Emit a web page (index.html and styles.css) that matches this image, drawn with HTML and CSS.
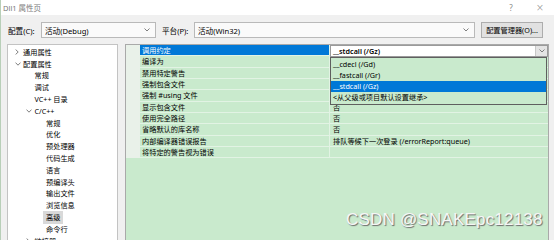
FILE: index.html
```html
<!DOCTYPE html>
<html>
<head>
<meta charset="utf-8">
<link rel="stylesheet" href="styles.css">
</head>
<body>
<div class="window">
  <div class="titlebar">
    <span class="title">Dll1 属性页</span>
    <span class="tb-btns"><span class="tb-btn">?</span><span class="tb-btn close">×</span></span>
  </div>
  <div class="toolbar">
    <span class="lbl lbl-cfg">配置(C):</span>
    <div class="combo combo-cfg"><span>活动(Debug)</span><svg class="chev" viewBox="0 0 6 4" width="6" height="4"><polyline points="0.5,0.5 3,3 5.5,0.5"/></svg></div>
    <span class="lbl lbl-plat">平台(P):</span>
    <div class="combo combo-plat"><span>活动(Win32)</span><svg class="chev" viewBox="0 0 6 4" width="6" height="4"><polyline points="0.5,0.5 3,3 5.5,0.5"/></svg></div>
    <div class="btn">配置管理器(O)...</div>
  </div>
  <div class="main">
    <div class="tree">
      <div class="item lvl0"><span class="arr"><svg viewBox="0 0 4 6" width="4" height="6"><polyline points="0.6,0.5 3.2,3 0.6,5.5"/></svg></span><span>通用属性</span></div>
      <div class="item lvl0"><span class="arr"><svg viewBox="0 0 6 4" width="6" height="4"><polyline points="0.5,0.6 3,3.2 5.5,0.6"/></svg></span><span>配置属性</span></div>
      <div class="item lvl1"><span class="arr"></span><span>常规</span></div>
      <div class="item lvl1"><span class="arr"></span><span>调试</span></div>
      <div class="item lvl1"><span class="arr"></span><span>VC++ 目录</span></div>
      <div class="item lvl1"><span class="arr"><svg viewBox="0 0 6 4" width="6" height="4"><polyline points="0.5,0.6 3,3.2 5.5,0.6"/></svg></span><span>C/C++</span></div>
      <div class="item lvl2"><span class="arr"></span><span>常规</span></div>
      <div class="item lvl2"><span class="arr"></span><span>优化</span></div>
      <div class="item lvl2"><span class="arr"></span><span>预处理器</span></div>
      <div class="item lvl2"><span class="arr"></span><span>代码生成</span></div>
      <div class="item lvl2"><span class="arr"></span><span>语言</span></div>
      <div class="item lvl2"><span class="arr"></span><span>预编译头</span></div>
      <div class="item lvl2"><span class="arr"></span><span>输出文件</span></div>
      <div class="item lvl2"><span class="arr"></span><span>浏览信息</span></div>
      <div class="item lvl2"><span class="arr"></span><span class="sel">高级</span></div>
      <div class="item lvl2"><span class="arr"></span><span>命令行</span></div>
      <div class="item lvl1"><span class="arr"><svg viewBox="0 0 4 6" width="4" height="6"><polyline points="0.6,0.5 3.2,3 0.6,5.5"/></svg></span><span>链接器</span></div>
    </div>
    <div class="grid">
      <div class="row">
        <div class="gutter"></div>
        <div class="name active">调用约定</div>
        <div class="value first">
          <div class="cell-combo"><span class="cc-text">__stdcall (/Gz)</span><span class="cc-btn"><svg viewBox="0 0 6 4" width="6" height="4"><polyline points="0.5,0.5 3,3 5.5,0.5"/></svg></span></div>
          <div class="dropdown">
            <div class="opt">__cdecl (/Gd)</div>
            <div class="opt">__fastcall (/Gr)</div>
            <div class="opt picked">__stdcall (/Gz)</div>
            <div class="opt">&lt;从父级或项目默认设置继承&gt;</div>
          </div>
        </div>
      </div>
      <div class="row"><div class="gutter"></div><div class="name">编译为</div><div class="value"></div></div>
      <div class="row"><div class="gutter"></div><div class="name">禁用特定警告</div><div class="value"></div></div>
      <div class="row"><div class="gutter"></div><div class="name">强制包含文件</div><div class="value"></div></div>
      <div class="row"><div class="gutter"></div><div class="name">强制 #using 文件</div><div class="value"></div></div>
      <div class="row"><div class="gutter"></div><div class="name">显示包含文件</div><div class="value">否</div></div>
      <div class="row"><div class="gutter"></div><div class="name">使用完全路径</div><div class="value">否</div></div>
      <div class="row"><div class="gutter"></div><div class="name">省略默认的库名称</div><div class="value">否</div></div>
      <div class="row"><div class="gutter"></div><div class="name">内部编译器错误报告</div><div class="value">排队等候下一次登录 (/errorReport:queue)</div></div>
      <div class="row"><div class="gutter"></div><div class="name">将特定的警告视为错误</div><div class="value"></div></div>
      <div class="watermark">CSDN @SNAKEpc12138</div>
    </div>
  </div>
</div>
</body>
</html>
```

FILE: styles.css
```css
html, body {
  margin: 0;
  padding: 0;
}
body {
  width: 554px;
  height: 240px;
  overflow: hidden;
  background: #f0f0f0;
  font-family: "Noto Sans", "Noto Sans CJK SC", sans-serif;
  font-size: 7.2px;
  color: #000;
}
.window {
  height: 240px;
  border-left: 1px solid #b8cfb8;
  box-sizing: border-box;
}
.titlebar {
  height: 15px;
  background: #fff;
  display: flex;
  align-items: center;
  padding-left: 2px;
  color: #7a7a7a;
  font-size: 7.5px;
}
.tb-btns {
  margin-left: auto;
  margin-right: 9px;
  display: flex;
  gap: 19px;
  color: #8a8a8a;
}
.tb-btn {
  width: 10px;
  text-align: center;
  font-size: 8px;
}
.tb-btn.close {
  font-size: 10px;
  font-family: "DejaVu Sans", sans-serif;
  font-weight: 300;
}
.toolbar {
  display: flex;
  align-items: center;
  height: 16px;
  margin-top: 7px;
  padding-left: 7px;
  font-size: 7.6px;
}
.lbl-cfg { width: 33px; }
.lbl-plat { width: 32px; }
.combo {
  height: 16px;
  box-sizing: border-box;
  border: 1px solid #b9b9b9;
  background: #fafafa;
  display: flex;
  align-items: center;
  padding-left: 3px;
  padding-right: 5px;
}
.combo span { flex: 1; }
.combo-cfg { width: 115px; margin-right: 6px; }
.combo-plat { width: 281px; margin-right: 6px; }
.chev polyline, .arr polyline, .cc-btn polyline {
  fill: none;
  stroke: #707070;
  stroke-width: 0.9;
}
.btn {
  width: 62px;
  height: 16px;
  box-sizing: border-box;
  border: 1px solid #adadad;
  background: #e1e1e1;
  display: flex;
  align-items: center;
  justify-content: center;
  font-size: 7.2px;
}
.main {
  display: flex;
  margin-top: 6px;
  padding-left: 6px;
  gap: 7px;
  height: 196px;
}
.tree {
  width: 111px;
  box-sizing: border-box;
  border: 1px solid #c3c3c3;
  border-bottom: none;
  background: #fff;
  padding-top: 1px;
  overflow: hidden;
}
.item {
  height: 11.8px;
  display: flex;
  align-items: center;
  white-space: nowrap;
}
.lvl0 { padding-left: 5px; }
.lvl1 { padding-left: 16.5px; }
.lvl2 { padding-left: 28px; }
.arr {
  width: 10px;
  display: flex;
  align-items: center;
  padding-left: 1.5px;
  box-sizing: border-box;
}
.sel {
  background: #d9d9d9;
  padding: 1.5px 3px;
  margin-left: -3px;
}
.grid {
  width: 424px;
  box-sizing: border-box;
  border: 1px solid #a9a9a9;
  border-bottom: none;
  background: #c9eacd;
  position: relative;
}
.row {
  display: flex;
  height: 11.33px;
  position: relative;
}
.gutter {
  width: 14px;
  background: #e9f1e9;
  flex: none;
}
.name, .value {
  box-sizing: border-box;
  border-bottom: 1px solid #e2f3e4;
  display: flex;
  align-items: center;
  white-space: nowrap;
  overflow: visible;
}
.name {
  width: 190px;
  flex: none;
  padding-left: 2px;
  border-right: 1px solid #e2f3e4;
}
.name.active {
  background: #0078d7;
  color: #fff;
}
.value {
  flex: 1;
  padding-left: 3px;
}
.value.first {
  padding-left: 0;
  position: relative;
  border-bottom: none;
}
.cell-combo {
  position: absolute;
  left: 0;
  top: 0;
  right: 0;
  height: 12px;
  box-sizing: border-box;
  background: #fff;
  border: 1px solid #9a9a9a;
  display: flex;
  align-items: center;
  z-index: 3;
}
.cc-text {
  flex: 1;
  padding-left: 2px;
  font-weight: 600;
}
.cc-btn {
  width: 11px;
  height: 100%;
  background: #e4e4e4;
  border-left: 1px solid #c8c8c8;
  display: flex;
  align-items: center;
  justify-content: center;
}
.dropdown {
  position: absolute;
  left: 0;
  right: 1px;
  top: 12px;
  box-sizing: border-box;
  border: 1px solid #5f5f5f;
  background: #c9eacd;
  padding: 0.5px 0 1px;
  z-index: 2;
}
.opt {
  height: 11px;
  display: flex;
  align-items: center;
  padding-left: 2px;
  white-space: nowrap;
}
.opt.picked {
  background: #0078d7;
  color: #fff;
}
.watermark {
  position: absolute;
  left: 220px;
  top: 165px;
  font-family: "Liberation Sans", Arial, sans-serif;
  font-size: 17px;
  color: #f6f6f6;
  text-shadow: 1px 1px 1px #6a6a6a;
  white-space: nowrap;
  letter-spacing: 0.2px;
}
```
